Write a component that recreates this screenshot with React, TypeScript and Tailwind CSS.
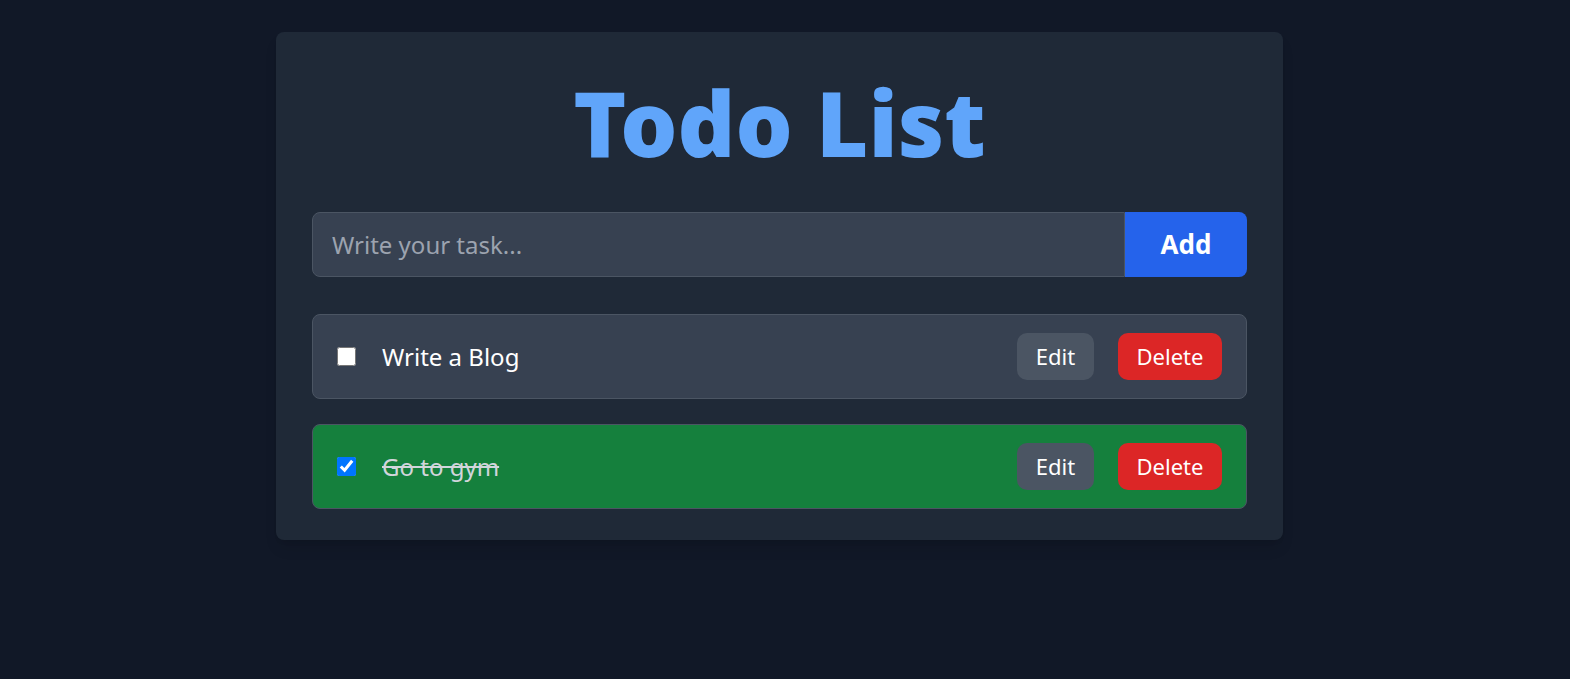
import React, { useState } from "react";

type Todo = { id: number; text: string; done: boolean };

export default function App() {
  const [todos, setTodos] = useState<Todo[]>([
    { id: 1, text: "Write a Blog", done: false },
    { id: 2, text: "Go to gym", done: true },
  ]);
  const [value, setValue] = useState("");

  const toggle = (id: number) =>
    setTodos((t) => t.map((x) => (x.id === id ? { ...x, done: !x.done } : x)));

  return (
    <div
      className="min-h-screen bg-[#111827] flex justify-center items-start pr-[11px] pt-8"
      style={{ fontFamily: '"Noto Sans", "Open Sans", sans-serif' }}
    >
      <div className="w-[1007px] bg-[#1f2937] rounded-lg px-9 pt-[45px] pb-[31px] shadow-lg">
        <h1 className="text-center text-[90px] leading-none font-black text-[#60a5fa] mb-[45px]">
          Todo List
        </h1>
        <div className="flex h-[65px]">
          <input
            value={value}
            onChange={(e) => setValue(e.target.value)}
            placeholder="Write your task..."
            className="flex-1 min-w-0 bg-[#374151] border border-[#4b5563] rounded-l-lg px-[19px] text-[24px] text-white placeholder:text-[#9ca3af] outline-none"
          />
          <button className="w-[122px] bg-[#2563eb] rounded-r-lg text-[26px] font-bold text-white">
            Add
          </button>
        </div>
        <div className="mt-[37px] flex flex-col gap-[25px]">
          {todos.map((t) => (
            <div
              key={t.id}
              className={`h-[85px] rounded-lg border border-[#4b5563] px-6 flex items-center ${
                t.done ? "bg-[#15803d]" : "bg-[#374151]"
              }`}
            >
              <input
                type="checkbox"
                checked={t.done}
                onChange={() => toggle(t.id)}
                className="w-[19px] h-[19px] m-0"
              />
              <span
                className={`ml-[26px] flex-1 text-[24px] ${
                  t.done ? "line-through text-[#d1d5db]" : "text-white"
                }`}
              >
                {t.text}
              </span>
              <button className="w-[77px] h-[47px] rounded-[10px] bg-[#4b5563] text-white text-[22px]">
                Edit
              </button>
              <button className="ml-6 w-[104px] h-[47px] rounded-[10px] bg-[#dc2626] text-white text-[22px]">
                Delete
              </button>
            </div>
          ))}
        </div>
      </div>
    </div>
  );
}
